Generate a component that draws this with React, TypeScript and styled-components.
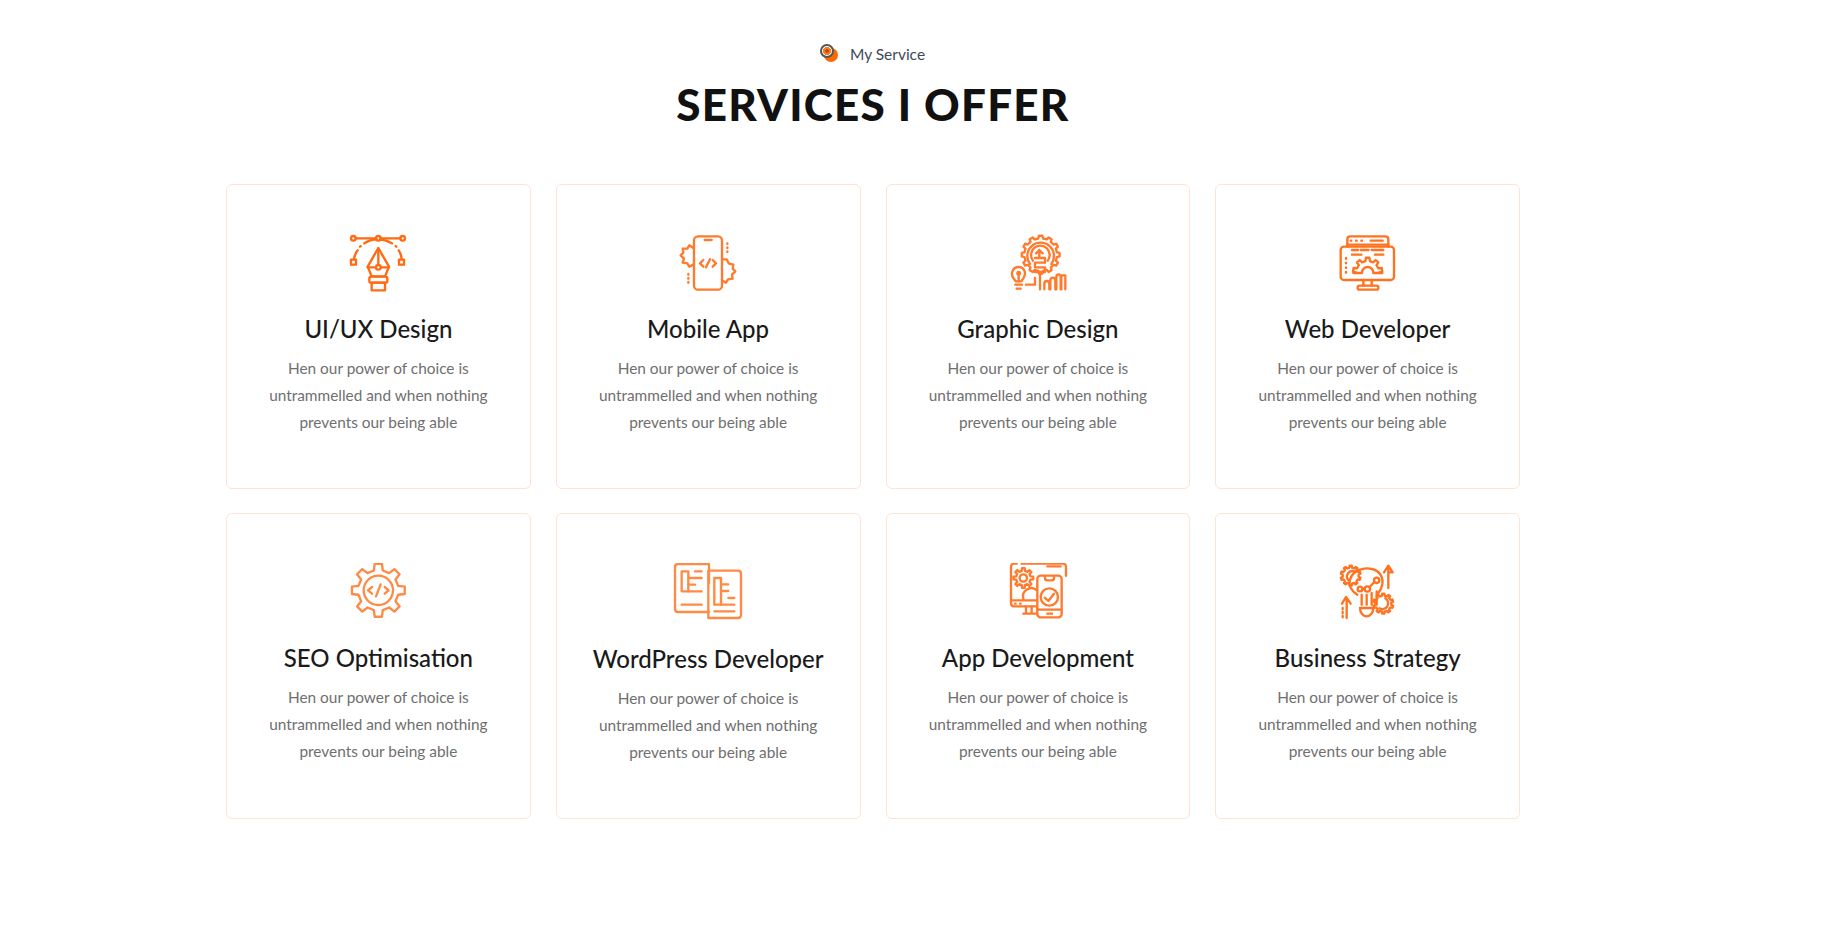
import React from "react";
import styled, { createGlobalStyle } from "styled-components";

const Global = createGlobalStyle`
  html, body { margin: 0; padding: 0; background: #fff; }
  body { font-family: "Lato", "Open Sans", sans-serif; }
`;

const Page = styled.main`
  width: 1294px;
  height: 932px;
  margin-left: 226px;
  padding-top: 44px;
  box-sizing: border-box;
  overflow: hidden;
`;

const Header = styled.header`
  display: flex;
  flex-direction: column;
  align-items: center;
  margin-bottom: 50px;
`;

const Eyebrow = styled.div`
  display: flex;
  align-items: center;
  gap: 12px;
  height: 20px;
  font-size: 15.5px;
  color: #3e4a58;
`;

const Bullet = styled.span`
  position: relative;
  width: 14px;
  height: 14px;
  border-radius: 50%;
  background: #ff6a00;
  margin: 1px 0 0 3px;
  &::before {
    content: "";
    position: absolute;
    left: -4px;
    top: -4px;
    width: 10px;
    height: 10px;
    border-radius: 50%;
    border: 2px solid #555;
    background: radial-gradient(circle, #b8530f 0 2px, #ff7a1c 2px 4px, #fff 4px);
  }
`;

const Heading = styled.h1`
  margin: 10px 0 0;
  font-size: 44px;
  line-height: 60px;
  font-weight: 900;
  color: #111;
  letter-spacing: 1.25px;
`;

const Grid = styled.section`
  display: grid;
  grid-template-columns: repeat(4, 1fr);
  gap: 24px 25px;
`;

const Card = styled.article`
  display: flex;
  flex-direction: column;
  align-items: center;
  box-sizing: border-box;
  padding: 49px 10px 52px;
  border: 1.5px solid #ffe3d5;
  border-radius: 6px;
  text-align: center;
`;

const IconSlot = styled.svg<{ $tall?: boolean }>`
  display: block;
  width: 100px;
  height: ${(p) => (p.$tall ? 61 : 60)}px;
  margin-bottom: 19px;
  fill: none;
  stroke: currentColor;
  stroke-width: 7;
  stroke-linecap: round;
  stroke-linejoin: round;
  color: ${(p) => p.color};
`;

const CardTitle = styled.h3`
  margin: 0 0 10px;
  font-size: 24px;
  line-height: 32px;
  font-weight: 500;
  color: #1a1a1a;
`;

const CardText = styled.p`
  margin: 0;
  font-size: 15.4px;
  line-height: 27px;
  font-weight: 400;
  color: #6f6f6f;
`;

function gear(cx: number, cy: number, ro: number, ri: number, teeth: number) {
  const pts: string[] = [];
  const step = (Math.PI * 2) / teeth;
  for (let i = 0; i < teeth; i++) {
    const a = i * step - Math.PI / 2;
    const w = step * 0.22;
    const p = (r: number, t: number) =>
      `${(cx + r * Math.cos(t)).toFixed(1)} ${(cy + r * Math.sin(t)).toFixed(1)}`;
    pts.push(p(ri, a - step * 0.28), p(ro, a - w * 0.8), p(ro, a + w * 0.8), p(ri, a + step * 0.28));
  }
  return `M${pts.join("L")}Z`;
}

const Pen = () => (
  <>
    <path d="M77 53H138M152 53H211" />
    <circle cx="70" cy="53" r="7" />
    <circle cx="145" cy="53" r="7" />
    <circle cx="218" cy="53" r="7" />
    <rect x="63" y="117" width="15" height="15" />
    <rect x="207" y="117" width="15" height="15" />
    <path d="M72 115C74 103 78 95 83 89M90 78l2-2M103 68C115 60 128 56 140 56M150 56C163 57 176 62 186 68M197 76l2 2M206 89C211 96 214 104 215 115" />
    <path d="M145 82L113 138L125 167H165L177 138Z" />
    <path d="M145 84V133M113 140H137M153 140H177" />
    <circle cx="145" cy="140" r="7" />
    <rect x="118" y="168" width="54" height="18" rx="6" />
    <rect x="125" y="186" width="40" height="23" />
  </>
);

const Phone = () => (
  <>
    <rect x="102" y="47" width="84" height="160" rx="12" />
    <path d="M134 58H155" />
    <path d="M130 118L120 128L130 138M158 118L168 128L158 138M150 116L138 140" />
    <path d="M100 82L88 74L82 84L68 84L70 96L62 104L72 114L68 126L82 128L88 138L100 132" />
    <path d="M188 116L200 116L206 128L220 132L218 144L226 152L216 162L218 174L204 176L198 186L188 180" />
    <path d="M202 68V70M202 80V82M202 92V94M85 160V162M85 172V174M85 184V186" />
  </>
);

const Graphic = () => (
  <>
    <path d={gear(152, 102, 57, 49, 12)} />
    <path d="M120 130A40 40 0 1 1 184 130M129 120A28 28 0 1 1 173 120" />
    <path d="M148 112V88M138 98L148 88L158 98" />
    <path d="M135 112H165V126H135V140H165V154H135" />
    <path d="M78 182C68 172 62 162 68 150C76 134 98 136 104 152C108 164 100 174 94 182Z" />
    <circle cx="86" cy="158" r="4" />
    <path d="M86 162V182M76 192H96M80 204H92M108 192H135V172M150 160V206" />
    <path d="M163 206V190C163 178 178 178 178 190V206M181 206V180C181 168 196 168 196 180V206M199 206V170C199 158 212 158 212 170V206M214 206V164H226V206" />
  </>
);

const Web = () => (
  <>
    <clipPath id="webclip">
      <rect x="90" y="100" width="110" height="58" />
    </clipPath>
    <path d="M82 78V56Q82 47 91 47H196Q205 47 205 56V78" />
    <path d="M82 72H205" />
    <path d="M92 60H94M108 60H110M124 60H126M152 60H188" />
    <rect x="62" y="78" width="160" height="100" rx="10" />
    <path d="M96 88H114M122 88H146M155 88H190M96 102H124M165 102H190" />
    <path d="M78 112V114M78 126V128M78 140V142M78 154V156" />
    <path d={gear(143, 155, 44, 34, 9)} clipPath="url(#webclip)" />
    <path d="M126 156A17 17 0 0 1 160 156M100 157H126M160 157H187" />
    <path d="M130 178V195M155 178V195" />
    <rect x="113" y="195" width="62" height="12" rx="5" />
  </>
);

const Seo = () => (
  <>
    <path d={gear(145, 122, 80, 61, 8)} />
    <circle cx="145" cy="122" r="44" />
    <path d="M126 112L114 122L126 132M164 112L176 122L164 132M152 104L138 140" />
  </>
);

const Docs = () => (
  <>
    <path d="M147 187H54Q45 187 45 178V52Q45 43 54 43H147V100" />
    <path d="M147 63H234Q243 63 243 72V196Q243 205 234 205H145V63" />
    <rect x="65" y="65" width="20" height="60" />
    <path d="M105 65H125M85 85H125M85 105H105M85 125H125M65 165H125" />
    <rect x="163" y="85" width="20" height="80" />
    <path d="M183 104H205M183 124H205M205 145H223M183 165H223M163 185H223" />
  </>
);

const AppDev = () => (
  <>
    <path d="M140 170H72Q63 170 63 161V52Q63 42 72 42H80M95 42H219Q228 42 228 52V78" />
    <path d="M63 152H140M75 162H77M90 162H92M172 50H212" />
    <path d="M108 170V190M125 170V190M100 192H140" />
    <path d={gear(100, 85, 30, 22, 8)} />
    <circle cx="100" cy="85" r="11" />
    <path d="M100 148A25 25 0 0 1 138 120" />
    <rect x="142" y="78" width="73" height="125" rx="10" />
    <path d="M165 80V86Q165 92 172 92H186Q192 92 192 86V80M142 180H215M172 192H186" />
    <circle cx="178" cy="142" r="26" />
    <path d="M164 144L175 154L192 132" />
  </>
);

const Strategy = () => (
  <>
    <path d={gear(92, 78, 30, 24, 10)} />
    <path d="M86 92A16 16 0 0 1 104 66" />
    <path d={gear(190, 162, 30, 24, 10)} />
    <path d="M196 146A16 16 0 0 1 178 176" />
    <path d="M112 135C96 125 84 108 90 90C98 62 130 52 156 58C180 64 192 84 186 108C184 116 180 124 175 130" />
    <circle cx="120" cy="118" r="7" />
    <circle cx="142" cy="118" r="8" />
    <circle cx="170" cy="92" r="8" />
    <path d="M127 118H134M149 112L163 97M125 135V165M140 135V165M155 130V165M170 125V165" />
    <path d="M120 175H160C160 190 150 200 140 200C130 200 120 190 120 175Z" />
    <path d="M205 115V55M192 68L205 48L218 68H205" />
    <path d="M80 205V150M66 162L78 142L92 162" />
    <path d="M68 175V205" strokeDasharray="4 8" />
  </>
);

type Service = {
  title: string;
  icon: React.ReactNode;
  color: string;
  tall?: boolean;
};

const services: Service[] = [
  { title: "UI/UX Design", icon: <Pen />, color: "#ff6a13" },
  { title: "Mobile App", icon: <Phone />, color: "#ff7a2c" },
  { title: "Graphic Design", icon: <Graphic />, color: "#ff7a2c" },
  { title: "Web Developer", icon: <Web />, color: "#ff7220" },
  { title: "SEO Optimisation", icon: <Seo />, color: "#ff8a45" },
  { title: "WordPress Developer", icon: <Docs />, color: "#ff8a45", tall: true },
  { title: "App Development", icon: <AppDev />, color: "#ff7a2c" },
  { title: "Business Strategy", icon: <Strategy />, color: "#ff7220" },
];

export default function App() {
  return (
    <Page>
      <Global />
      <Header>
        <Eyebrow>
          <Bullet />
          My Service
        </Eyebrow>
        <Heading>SERVICES I OFFER</Heading>
      </Header>
      <Grid>
        {services.map((s) => (
          <Card key={s.title}>
            <IconSlot viewBox={s.tall ? "-6 40 300 183" : "-6 40 300 180"} color={s.color} $tall={s.tall}>
              {s.icon}
            </IconSlot>
            <CardTitle>{s.title}</CardTitle>
            <CardText>
              Hen our power of choice is
              <br />
              untrammelled and when nothing
              <br />
              prevents our being able
            </CardText>
          </Card>
        ))}
      </Grid>
    </Page>
  );
}
